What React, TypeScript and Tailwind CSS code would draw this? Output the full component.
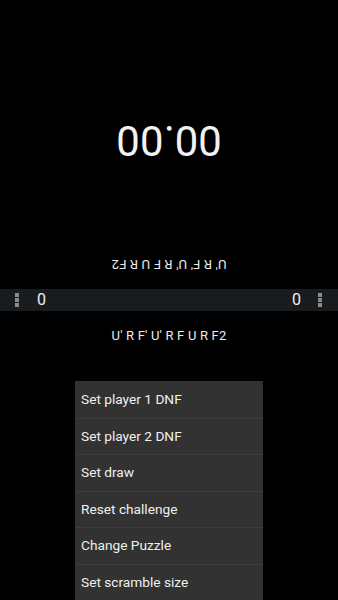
import React from "react";

const SCRAMBLE = "U' R F' U' R F U R F2";

function Half({ rotated }: { rotated?: boolean }) {
  return (
    <div className={`h-[289px] w-full bg-black flex flex-col items-center ${rotated ? "rotate-180" : ""}`}>
      <div className="mt-[17px] text-[13px] leading-[16px] text-[#ececec] tracking-[0.2px]">{SCRAMBLE}</div>
      <div className="mt-[91px] text-[42px] leading-[50px] text-[#f2f2f2]">00.00</div>
    </div>
  );
}

function Dots() {
  return (
    <div className="flex flex-col gap-[1px]">
      <div className="w-[4px] h-[4px] bg-[#8a8a8a]" />
      <div className="w-[4px] h-[4px] bg-[#8a8a8a]" />
      <div className="w-[4px] h-[4px] bg-[#8a8a8a]" />
    </div>
  );
}

const ITEMS = [
  "Set player 1 DNF",
  "Set player 2 DNF",
  "Set draw",
  "Reset challenge",
  "Change Puzzle",
  "Set scramble size",
];

export default function App() {
  return (
    <div
      className="relative w-[338px] h-[600px] overflow-hidden bg-black"
      style={{ fontFamily: "Roboto, 'Noto Sans', sans-serif" }}
    >
      <Half rotated />
      <div className="h-[22px] bg-[#191c1f] flex items-center">
        <div className="ml-[15px]"><Dots /></div>
        <div className="ml-[18px] text-[16px] leading-[20px] text-[#f0f0f0]">0</div>
        <div className="flex-1" />
        <div className="text-[16px] leading-[20px] text-[#f0f0f0]">0</div>
        <div className="ml-[17px] mr-[16px]"><Dots /></div>
      </div>
      <div className="h-[289px] w-full bg-black flex flex-col items-center">
        <div className="mt-[17px] text-[13px] leading-[16px] text-[#ececec] tracking-[0.2px]">{SCRAMBLE}</div>
      </div>
      <div className="absolute left-[75px] top-[381px] w-[188px] bg-[#323232] flex flex-col">
        {ITEMS.map((t, i) => (
          <div
            key={t}
            className={`h-[36.5px] flex items-center pl-[6px] text-[13.7px] text-[#f0f0f0] ${i > 0 ? "border-t border-[#3d3d3d]" : ""}`}
          >
            {t}
          </div>
        ))}
      </div>
    </div>
  );
}
